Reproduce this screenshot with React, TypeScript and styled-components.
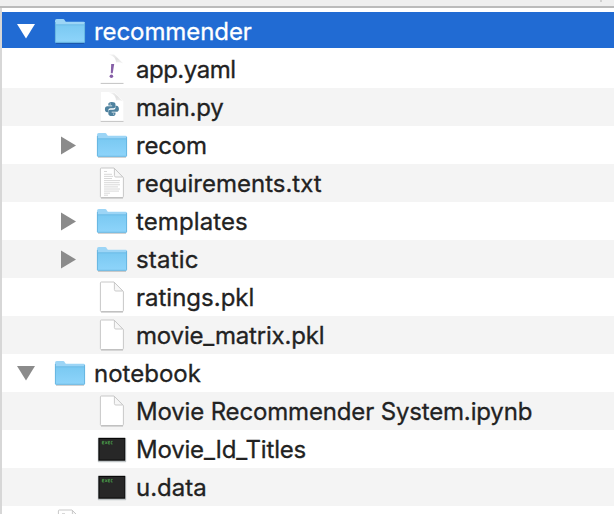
import React from "react";
import styled, { createGlobalStyle } from "styled-components";

const GlobalStyle = createGlobalStyle`
  html, body { margin: 0; background: #fff; overflow: hidden; }
`;

const Window = styled.main`
  width: 614px;
  height: 514px;
  overflow: hidden;
  background: #fff;
  font-family: Inter, "Liberation Sans", sans-serif;
`;

const ColumnHeader = styled.header`
  box-sizing: border-box;
  height: 8px;
  padding-left: 600px;
  background: #efefef;
  border-bottom: 2px solid #bbb;
`;

const ColumnDivider = styled.div`
  width: 2px;
  height: 2px;
  background: #d0d0d0;
`;

const List = styled.ul`
  box-sizing: border-box;
  height: 506px;
  margin: 0;
  padding: 4px 0 0;
  border-left: 2px solid #d7d7d7;
  list-style: none;
`;

const Row = styled.li<{ $level: number; $striped: boolean; $selected: boolean }>`
  box-sizing: border-box;
  display: flex;
  height: 38px;
  padding-left: ${(p) => 8 + p.$level * 42}px;
  color: ${(p) => (p.$selected ? "#fff" : "#222")};
  background: ${(p) => (p.$selected ? "#216bd3" : p.$striped ? "#f4f4f4" : "#fff")};
  border-bottom: ${(p) => (p.$selected ? "2px solid #fff" : "0")};
`;

const Slot = styled.svg`
  flex: none;
  display: block;
  height: 38px;
  overflow: visible;
`;

const Label = styled.span<{ $spacing: number }>`
  font-size: 24px;
  line-height: 40px;
  font-weight: 400;
  letter-spacing: ${(p) => p.$spacing}px;
  white-space: pre;
  -webkit-text-stroke: 0.3px currentColor;
`;

type Kind = "folder" | "yaml" | "python" | "text" | "blank" | "exec";

interface Entry {
  name: string;
  kind: Kind;
  level: number;
  open?: boolean;
  spacing?: number;
}

const entries: Entry[] = [
  { name: "recommender", kind: "folder", level: 0, open: true, spacing: -0.08 },
  { name: "app.yaml", kind: "yaml", level: 1, spacing: -0.5 },
  { name: "main.py", kind: "python", level: 1, spacing: -0.25 },
  { name: "recom", kind: "folder", level: 1, open: false, spacing: -0.2 },
  { name: "requirements.txt", kind: "text", level: 1 },
  { name: "templates", kind: "folder", level: 1, open: false, spacing: 0.1 },
  { name: "static", kind: "folder", level: 1, open: false, spacing: 0.2 },
  { name: "ratings.pkl", kind: "blank", level: 1 },
  { name: "movie_matrix.pkl", kind: "blank", level: 1, spacing: -0.18 },
  { name: "notebook", kind: "folder", level: 0, open: true },
  { name: "Movie Recommender System.ipynb", kind: "blank", level: 1, spacing: -0.16 },
  { name: "Movie_Id_Titles", kind: "exec", level: 1, spacing: -0.2 },
  { name: "u.data", kind: "exec", level: 1 },
  { name: "", kind: "text", level: 0 },
];

function Disclosure({ open, selected }: { open?: boolean; selected: boolean }) {
  return (
    <Slot width="42" viewBox="0 0 42 38">
      {open !== undefined && (
        <path
          d={open ? "M7 12H25L16 26.6Z" : "M9 10.5V28.5L24 19.5Z"}
          fill={selected ? "#fff" : "#8b8b8b"}
        />
      )}
    </Slot>
  );
}

function FolderIcon() {
  return (
    <>
      <path d="M4 31.2H32" stroke="#000" strokeOpacity=".2" strokeWidth="1.4" />
      <path
        d="M3 9Q3 7.1 4.7 7.1H11Q12.2 7.1 12.9 8.4L13.8 9.7H31.5Q33 9.7 33 11V29.6Q33 30.6 32 30.6H4Q3 30.6 3 29.6Z"
        fill="#9cd5f6"
      />
      <path d="M3 12.8H33V29.6Q33 30.6 32 30.6H4Q3 30.6 3 29.6Z" fill="url(#folderFront)" />
      <path d="M3.5 12.8H32.5" stroke="#65b7e2" strokeWidth=".8" />
      <path d="M3.4 10V29.6Q3.4 30.3 4.2 30.3H31.8Q32.6 30.3 32.6 29.6V11" fill="none" stroke="#5eafdb" strokeWidth=".8" />
    </>
  );
}

function PageIcon({ lined = false }: { lined?: boolean }) {
  return (
    <>
      <path
        d="M7.4 4H20L29.4 13.5V32.3Q29.4 33.6 28.2 33.6H7.6Q6.4 33.6 6.4 32.6V5Q6.4 4 7.4 4Z"
        fill="#fff"
        stroke="#c8c8c8"
        strokeWidth="1"
      />
      <path d="M7 34H29" stroke="#b3b3b3" strokeWidth=".9" />
      <path d="M20.4 4.4V11.6Q20.4 13 21.8 13H28.8Z" fill="#f7f7f7" stroke="#c5c5c5" strokeWidth=".9" />
      {lined && (
        <g stroke="#d4d4d4" strokeWidth=".9">
          <path d="M10 7.5H13M10 10.3H18M10 12.4H19M10 14.5H18M10 16.6H26" />
          <path d="M10 18.7H25.5M10 20.8H26M10 22.9H24M10 25H26M10 27.1H25M10 29.2H16M10 31.2H14" />
        </g>
      )}
    </>
  );
}

function CodePage({ children }: { children: React.ReactNode }) {
  return (
    <>
      <path d="M7 4H20L29.3 13V33H7Z" fill="#fff" />
      <path d="M7 4.5H20L29.3 13.6Q25 11.8 22 12.6Q22 6.5 15 4.5Z" fill="url(#pageCurl)" />
      <path d="M6.7 33.4H29.5" stroke="#c3c3c3" strokeWidth="1" />
      {children}
    </>
  );
}

function ExecIcon() {
  return (
    <>
      <rect x="3.8" y="8" width="28.4" height="24.2" rx=".7" fill="#c0c5c7" />
      <rect x="4.4" y="7.8" width="26.8" height="22.9" fill="#080808" />
      <rect x="5.5" y="9" width="25" height="20.6" fill="#272727" />
      <path
        d="M10.3 11.4H8.3V14H10.3M8.3 12.7H10.2M11.3 11.4L13 14M13 11.4L11.3 14M16 11.4H14.2V14H16M14.2 12.7H15.8M18.6 11.4H17.2V14H18.6"
        fill="none"
        stroke="#4cac4d"
        strokeOpacity=".8"
        strokeWidth=".9"
      />
    </>
  );
}

const SNAKE =
  "M12 0C7.5 0 6 1.6 6 4V6.2H12.6V7.4H4.4C1.5 7.4 0 9.4 0 12.4S1.5 17.8 4.2 17.8H6V14.8C6 12.4 7.6 10.9 10 10.9H15.2C17.2 10.9 18.4 9.5 18.4 7.6V4C18.4 1.2 16 0 12 0ZM9.2 2.5A1 1 0 1 1 9.2 4.5A1 1 0 0 1 9.2 2.5Z";

function PythonMark() {
  return (
    <g fill="#4f829f" transform="translate(10.9 14) scale(.575)">
      <path d={SNAKE} />
      <path transform="rotate(180 12.2 12.2)" d={SNAKE} />
    </g>
  );
}

function FileIcon({ kind }: { kind: Kind }) {
  return (
    <Slot width="42" viewBox="0 0 42 38">
      <defs>
        <linearGradient id="folderFront" x1="0" y1="0" x2="0" y2="1">
          <stop offset="0" stopColor="#7ac9f2" />
          <stop offset="1" stopColor="#8ed4fa" />
        </linearGradient>
        <linearGradient id="pageCurl" x1="0" y1="0" x2="1" y2="1">
          <stop offset="0" stopColor="#fafafa" />
          <stop offset=".6" stopColor="#e1e1e1" />
          <stop offset="1" stopColor="#f5f5f5" />
        </linearGradient>
      </defs>
      {kind === "folder" && <FolderIcon />}
      {kind === "blank" && <PageIcon />}
      {kind === "text" && <PageIcon lined />}
      {kind === "exec" && <ExecIcon />}
      {kind === "yaml" && (
        <CodePage>
          <path d="M17.2 14H20.2L18.7 23.2H16.8Z" fill="#865fa7" />
          <circle cx="17.4" cy="26.2" r="1.8" fill="#865fa7" />
        </CodePage>
      )}
      {kind === "python" && (
        <CodePage>
          <PythonMark />
        </CodePage>
      )}
    </Slot>
  );
}

export default function App() {
  return (
    <>
      <GlobalStyle />
      <Window>
        <ColumnHeader>
          <ColumnDivider />
        </ColumnHeader>
        <List>
          {entries.map((entry, index) => {
            const selected = index === 0;
            return (
              <Row key={index} $level={entry.level} $striped={index % 2 === 0} $selected={selected}>
                <Disclosure open={entry.open} selected={selected} />
                <FileIcon kind={entry.kind} />
                <Label $spacing={entry.spacing ?? 0}>{entry.name}</Label>
              </Row>
            );
          })}
        </List>
      </Window>
    </>
  );
}
